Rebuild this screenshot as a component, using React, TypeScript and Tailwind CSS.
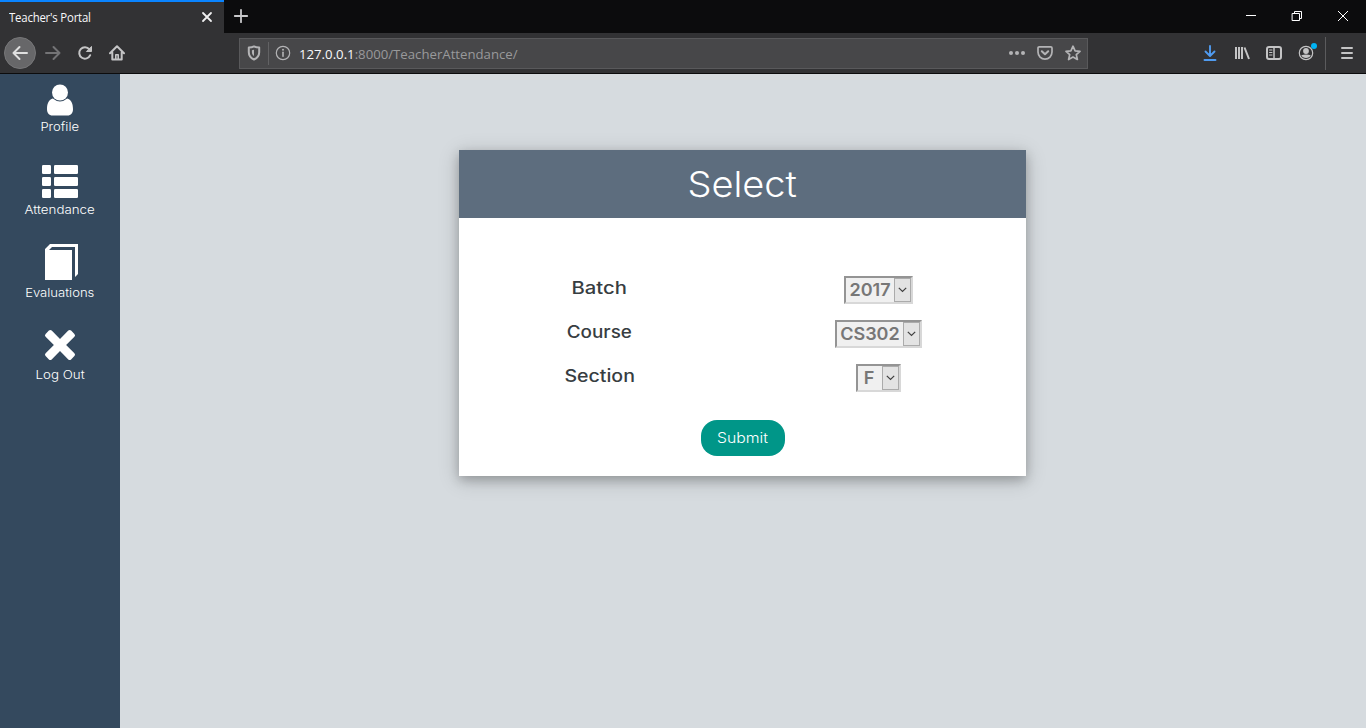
import type { ReactNode } from "react";

type IconProps = { className?: string; children: ReactNode; box?: number };

function Icon({ className = "", children, box = 16 }: IconProps) {
  return (
    <svg
      viewBox={`0 0 ${box} ${box}`}
      className={`shrink-0 ${className}`}
      width={box}
      height={box}
      fill="none"
      stroke="currentColor"
      strokeWidth="2"
      strokeLinecap="round"
      strokeLinejoin="round"
    >
      {children}
    </svg>
  );
}

function TabBar() {
  return (
    <div className="flex h-[33px] shrink-0 bg-[#0c0c0d]">
      <div className="flex w-[224px] items-center justify-between border-t-2 border-[#0a84ff] bg-[#323234] pr-[9px] pl-[9px]">
        <span className="origin-left scale-x-[0.95] text-[12px] leading-[16px] tracking-[-0.22px] text-[#f9f9fa]">
          Teacher's Portal
        </span>
        <Icon className="-mt-[2px] text-[#f0f0f1]">
          <path d="M4 4l8 8M12 4l-8 8" strokeWidth="1.8" />
        </Icon>
      </div>
      <Icon className="mt-2 ml-[9px] text-[#c8c8ca]">
        <path d="M8 1.8v12.4M1.8 8h12.4" strokeWidth="1.8" />
      </Icon>
      <div className="ml-auto flex text-white">
        <div className="flex w-[46px] justify-center pt-[8px]">
          <Icon>
            <path d="M3 7.5h10" strokeWidth="1" strokeLinecap="butt" />
          </Icon>
        </div>
        <div className="flex w-[46px] justify-center pt-[8px]">
          <Icon>
            <path d="M3.5 5.5h7v7h-7zM5.5 5.5v-2h7v7h-2" strokeWidth="1" strokeLinejoin="miter" />
          </Icon>
        </div>
        <div className="flex w-[46px] justify-center pt-[8px]">
          <Icon>
            <path d="M3 3l10 10M13 3L3 13" strokeWidth="1" strokeLinecap="butt" />
          </Icon>
        </div>
      </div>
    </div>
  );
}

function NavBar() {
  return (
    <div className="flex h-[41px] shrink-0 items-center border-b border-[#0c0c0d] bg-[#323234] text-[#c4c4c5]">
      <div className="ml-1 flex size-8 items-center justify-center rounded-full border border-[#777779] bg-[#676769]">
        <Icon className="text-[#e0e0e0]">
          <path d="M15 8H1.5M7.5 2l-6 6 6 6" />
        </Icon>
      </div>
      <Icon className="ml-[9px] text-[#747476]">
        <path d="M1 8h13.5M8.5 2l6 6-6 6" />
      </Icon>
      <Icon className="ml-4">
        <path d="M13.2 10.2A5.7 5.7 0 1 1 12.4 4.4" />
        <path d="M14.5 1.8V6.5H9.8z" fill="currentColor" strokeWidth="1" />
      </Icon>
      <Icon className="ml-4">
        <path d="M1 8.2L8 1.2l7 7M3.3 7.5v7h9.4v-7" />
        <path d="M6.8 14V9.8h2.4V14" strokeWidth="1.6" />
      </Icon>
      <div className="ml-[114px] flex h-[31px] w-[849px] items-center border border-[#59595b] bg-[#474749] pl-[6px]">
        <Icon className="text-[#b4b4b6]">
          <path d="M8 1.4c1.6.9 3.4 1.2 5.2 1.2v4.6c0 3.5-1.8 5.7-5.2 7.3-3.4-1.6-5.2-3.8-5.2-7.3V2.600C4.600 2.600 6.400 2.300 8 1.400z" />
          <path d="M8 4.800v6.300C6.400 10 5.900 8.900 5.900 7V5.200z" fill="currentColor" stroke="none" />
        </Icon>
        <div className="ml-[6px] h-[23px] w-px bg-[#626264]" />
        <Icon className="ml-[6px] text-[#b4b4b6]">
          <circle cx="8" cy="8" r="6.700" strokeWidth="1.200" />
          <path d="M8 7.300v4" strokeWidth="1.600" />
          <circle cx="8" cy="4.700" r="1" fill="currentColor" stroke="none" />
        </Icon>
        <span className="mt-[2px] ml-2 text-[13.2px] leading-[18px] text-[#99999b]">
          <span className="text-[#f9f9fa]">127.0.0.1</span>:8000/TeacherAttendance/
        </span>
        <div className="mr-[6px] ml-auto flex gap-3 text-[#b4b4b6]">
          <Icon>
            <g fill="currentColor" stroke="none">
              <circle cx="2" cy="8" r="2" />
              <circle cx="8" cy="8" r="2" />
              <circle cx="14" cy="8" r="2" />
            </g>
          </Icon>
          <Icon>
            <path d="M2.300 1.800h11.400q1.300 0 1.300 1.300v4a7 7 0 0 1-14 0v-4q0-1.300 1.300-1.300z" strokeWidth="1.700" />
            <path d="M4.800 6.200L8 9.300l3.200-3.100" />
          </Icon>
          <Icon>
            <path d="M8 1.200l2.100 4.600 4.900.5-3.700 3.300 1.100 4.900L8 12l-4.400 2.500 1.100-4.900L1 6.300l4.900-.5z" strokeWidth="1.700" />
          </Icon>
        </div>
      </div>
      <div className="ml-auto flex items-center">
        <Icon className="text-[#509bf0]">
          <path d="M8 1v9.500M3.500 6.500L8 11l4.500-4.500M2.500 15h11" strokeWidth="1.900" />
        </Icon>
        <Icon className="ml-4">
          <path d="M2 2v12M5 2v12M8 2v12M10.500 2.500l4.500 11.500" strokeWidth="2" strokeLinecap="butt" />
        </Icon>
        <Icon className="ml-4">
          <rect x="1" y="2" width="14" height="12" rx="2" />
          <path d="M8 2v12" strokeWidth="1.500" />
          <path d="M3.500 5H6M3.500 7.500H6M3.500 10H6" strokeWidth="1" />
        </Icon>
        <div className="relative ml-4">
          <Icon>
            <circle cx="8" cy="8" r="6.700" strokeWidth="1.200" />
            <circle cx="8" cy="6" r="2.900" fill="currentColor" stroke="none" />
            <path d="M3.300 10.300c2.700-1 6.700-1 9.400 0-.8 1.700-2.500 2.800-4.700 2.800s-3.900-1.100-4.700-2.800z" fill="currentColor" stroke="none" />
          </Icon>
          <div className="absolute -top-[2px] -right-[3px] size-[6px] rounded-full bg-[#00b3f4]" />
        </div>
        <div className="ml-[11px] h-[33px] w-px bg-[#5b5b5d]" />
        <Icon className="mr-[11px] ml-[13px]">
          <path d="M3 3h10M3 8h10M3 13h10" />
        </Icon>
      </div>
    </div>
  );
}

type SideItemProps = { label: string; stretch: string; lift?: string; children: ReactNode };

function SideItem({ label, stretch, lift = "", children }: SideItemProps) {
  return (
    <a className={`flex h-[83px] flex-col items-center ${lift}`}>
      <svg width="40" height="40" viewBox="0 0 40 40" fill="currentColor">
        {children}
      </svg>
      <span className={`text-[12px] leading-[18px] font-[360] whitespace-nowrap ${stretch}`}>{label}</span>
    </a>
  );
}

function Sidebar() {
  return (
    <nav className="flex w-[120px] shrink-0 flex-col bg-[#34495e] pt-[4px] font-[Inter,sans-serif] text-white">
      <SideItem label="Profile" stretch="scale-x-[1.09]">
        <ellipse cx="20" cy="14.500" rx="8" ry="8" />
        <path d="M12.800 20.500Q20 26.500 27.200 20.500C31 21.300 33 25.300 33 31c0 4-2 6.500-5.500 6.500h-15C9 37.500 7 35 7 31c0-5.700 2-9.700 5.800-10.500z" />
      </SideItem>
      <SideItem label="Attendance" stretch="scale-x-[1.11]">
        <rect x="2" y="4" width="9" height="9" rx="1.300" />
        <rect x="14" y="4" width="24" height="9" rx="1.300" />
        <rect x="2" y="16" width="9" height="9" rx="1.300" />
        <rect x="14" y="16" width="24" height="9" rx="1.300" />
        <rect x="2" y="28" width="9" height="9" rx="1.300" />
        <rect x="14" y="28" width="24" height="9" rx="1.300" />
      </SideItem>
      <SideItem label="Evaluations" stretch="scale-x-[1.09]">
        <path d="M10 0h28v30l-3 3V3H12L9 6h23v30H5V5z" />
      </SideItem>
      <SideItem label="Log Out" stretch="scale-x-[1.11] pt-px" lift="-mt-[2px]">
        <path d="M11.700 5.600L20 13.900l8.300-8.300q1.400-1.400 2.800 0l3.300 3.300q1.400 1.400 0 2.800L26.100 20l8.300 8.300q1.400 1.400 0 2.800l-3.300 3.300q-1.400 1.400-2.800 0L20 26.100l-8.300 8.300q-1.400 1.400-2.800 0l-3.300-3.300q-1.400-1.400 0-2.800l8.300-8.300-8.300-8.300q-1.400-1.400 0-2.800l3.300-3.300q1.400-1.400 2.800 0z" />
      </SideItem>
    </nav>
  );
}

function SelectBox({ value, width, inset }: { value: string; width: string; inset: string }) {
  return (
    <button
      className={`flex h-[28px] items-stretch border-2 border-t-[#949494] border-r-[#d8d8d8] border-b-[#d8d8d8] border-l-[#949494] bg-[#f0f0f0] ${width}`}
    >
      <span className={`flex-1 text-center text-[17.5px] leading-[24px] font-semibold text-[#777777] ${inset}`}>
        <span className="inline-block scale-x-[1.03]">{value}</span>
      </span>
      <span className="flex w-[17px] items-center justify-center border border-[#ababab] bg-[#e3e3e3] text-[#404040]">
        <svg width="9" height="6" viewBox="0 0 9 6" fill="none" stroke="currentColor" strokeWidth="1.200">
          <path d="M.8.8l3.700 3.700L8.200.8" />
        </svg>
      </span>
    </button>
  );
}

const rows = [
  { label: "Batch", value: "2017", width: "w-[69px]", inset: "", stretch: "scale-x-[1.19]" },
  { label: "Course", value: "CS302", width: "w-[87px]", inset: "", stretch: "scale-x-[1.11]" },
  { label: "Section", value: "F", width: "w-[45px]", inset: "pr-[2px]", stretch: "scale-x-[1.15]" },
];

export default function App() {
  return (
    <div className="flex h-[728px] w-[1366px] flex-col overflow-hidden font-['Open_Sans','Noto_Sans',sans-serif]">
      <TabBar />
      <NavBar />
      <div className="flex min-h-0 flex-1">
        <Sidebar />
        <main className="flex-1 bg-[#d6dbdf] pt-[76px] pl-[339px] font-[Inter,sans-serif]">
          <section className="flex h-[326px] w-[567px] flex-col items-center bg-white shadow-[0_4px_10px_0_rgba(0,0,0,0.2),0_4px_20px_0_rgba(0,0,0,0.19)]">
            <h1 className="h-[68px] w-full bg-[#5d6d7e] pt-px text-center text-[35.5px] leading-[68px] font-[350] text-white">
              <span className="inline-block scale-x-[1.07]">Select</span>
            </h1>
            <div className="mt-[50px] w-full">
              {rows.map((row) => (
                <div key={row.label} className="flex h-[44px] pl-px">
                  <div className="w-[279px] pt-[8px] text-center text-[17px] leading-[24px] font-medium text-[#373d41]">
                    <span className={`inline-block ${row.stretch}`}>{row.label}</span>
                  </div>
                  <div className="flex w-[279px] justify-center pt-2">
                    <SelectBox value={row.value} width={row.width} inset={row.inset} />
                  </div>
                </div>
              ))}
            </div>
            <button className="mt-5 h-[36px] w-[84px] rounded-[16px] bg-[#009688] text-[14.5px] leading-[36px] font-[350] text-white">
              <span className="inline-block scale-x-[1.09]">Submit</span>
            </button>
          </section>
        </main>
      </div>
    </div>
  );
}
